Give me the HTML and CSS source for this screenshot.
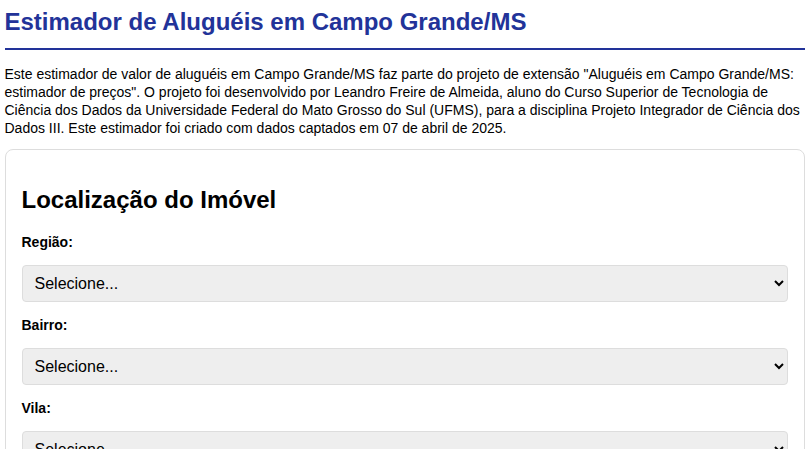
FILE: index.html
```html
<!DOCTYPE html>
<html lang="pt-BR">
<head>
<meta charset="utf-8">
<title>Estimador de Aluguéis em Campo Grande/MS</title>
<link rel="stylesheet" href="styles.css">
</head>
<body>
<div class="page">
  <h1 class="title">Estimador de Aluguéis em Campo Grande/MS</h1>
  <p class="intro">Este estimador de valor de aluguéis em Campo Grande/MS faz parte do projeto de extensão "Aluguéis em Campo Grande/MS: estimador de preços". O projeto foi desenvolvido por Leandro Freire de Almeida, aluno do Curso Superior de Tecnologia de Ciência dos Dados da Universidade Federal do Mato Grosso do Sul (UFMS), para a disciplina Projeto Integrador de Ciência dos Dados III. Este estimador foi criado com dados captados em 07 de abril de 2025.</p>
  <section class="card">
    <h2 class="card-title">Localização do Imóvel</h2>
    <label class="field-label" for="regiao">Região:</label>
    <select class="field-select" id="regiao"><option>Selecione...</option></select>
    <label class="field-label" for="bairro">Bairro:</label>
    <select class="field-select" id="bairro"><option>Selecione...</option></select>
    <label class="field-label" for="vila">Vila:</label>
    <select class="field-select" id="vila"><option>Selecione...</option></select>
  </section>
</div>
</body>
</html>
```
FILE: styles.css
```css
html, body {
  margin: 0;
  padding: 0;
  background: #fff;
}
body {
  font-family: "Liberation Sans", Arial, sans-serif;
  color: #000;
}
.page {
  max-width: 800px;
  margin: 0 auto;
}
.title {
  margin: 8px 0 0;
  padding-bottom: 12px;
  font-size: 24px;
  font-weight: bold;
  color: #223399;
  border-bottom: 2px solid #223399;
}
.intro {
  margin: 15px 0 12px;
  font-size: 14px;
  line-height: 18px;
}
.card {
  border: 1px solid #ddd;
  border-radius: 8px;
  padding: 16px;
}
.card-title {
  margin: 20px 0;
  font-size: 24px;
  font-weight: bold;
  color: #000;
}
.field-label {
  display: block;
  font-size: 14px;
  font-weight: bold;
  margin-bottom: 15px;
}
.field-select {
  display: block;
  width: 100%;
  box-sizing: border-box;
  height: 37px;
  padding: 0 8px;
  margin-bottom: 15px;
  font-family: "Liberation Sans", Arial, sans-serif;
  font-size: 16px;
  color: #000;
  background-color: #eee;
  border: 1px solid #ddd;
  border-radius: 4px;
}
```
